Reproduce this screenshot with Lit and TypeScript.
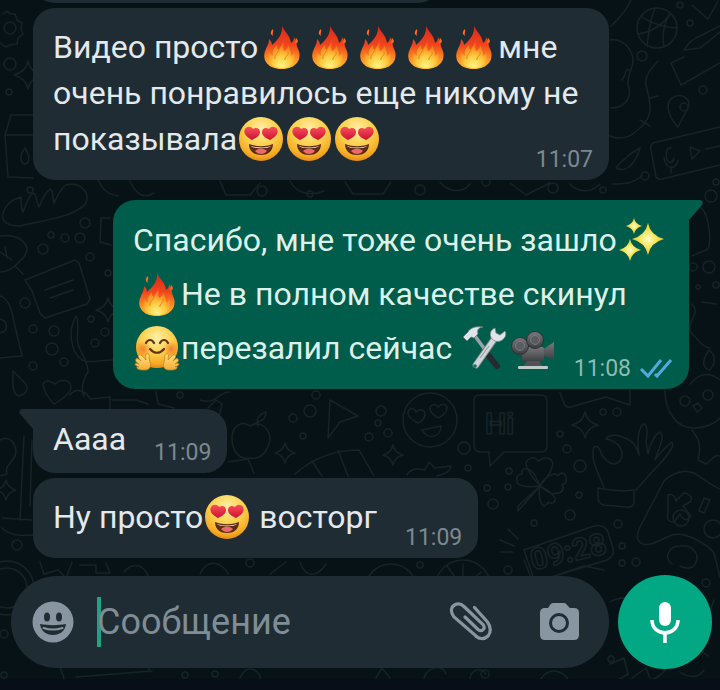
import { LitElement, html, svg, css } from "lit";
import { customElement, property } from "lit/decorators.js";

type Part = string | { e: string };
interface Message {
  out?: boolean;
  tail?: boolean;
  wide?: boolean;
  size?: string;
  time: string;
  lines: Part[][];
}

const e = (name: string) => ({ e: name });

const messages: Message[] = [
  {
    wide: true,
    time: "11:07",
    lines: [
      ["Видео просто", e("fire"), e("fire"), e("fire"), e("fire"), e("fire"), "мне"],
      ["очень понравилось еще никому не"],
      ["показывала", e("love"), e("love"), e("love")],
    ],
  },
  {
    out: true,
    tail: true,
    wide: true,
    size: "loose",
    time: "11:08",
    lines: [
      ["Спасибо, мне тоже очень зашло", e("sparkles")],
      [e("fire"), "Не в полном качестве скинул"],
      [e("hug"), "перезалил сейчас ", e("tools"), e("camera")],
    ],
  },
  { tail: true, size: "compact", time: "11:09", lines: [["Аааа"]] },
  { time: "11:09", lines: [["Ну просто", e("love"), " восторг"]] },
];

const labels: Record<string, string> = {
  fire: "🔥",
  love: "😍",
  sparkles: "✨",
  hug: "🤗",
  tools: "🛠",
  camera: "🎥",
};

const faceGradient = svg`
  <radialGradient id="face" cx="50%" cy="28%" r="72%">
    <stop offset="0" stop-color="#fff0a8"/><stop offset=".5" stop-color="#fdd14e"/>
    <stop offset=".85" stop-color="#f6ab25"/><stop offset="1" stop-color="#e58a16"/>
  </radialGradient>`;

const spark = (x: number, y: number, r: number) => {
  const k = r * 0.22;
  return `M${x} ${y - r}Q${x + k * 0.7} ${y - k} ${x + r} ${y}Q${x + k * 0.7} ${y + k} ${x} ${y + r}Q${x - k * 0.7} ${y + k} ${x - r} ${y}Q${x - k * 0.7} ${y - k} ${x} ${y - r}Z`;
};

const art: Record<string, unknown> = {
  fire: svg`
    <defs>
      <linearGradient id="flame" x1="0" y1="0" x2="0" y2="1">
        <stop offset="0" stop-color="#d8261c"/><stop offset=".45" stop-color="#f0441b"/>
        <stop offset=".75" stop-color="#fb8a22"/><stop offset="1" stop-color="#fcc53a"/>
      </linearGradient>
      <radialGradient id="core" cx="50%" cy="92%" r="80%">
        <stop offset="0" stop-color="#fff28a"/><stop offset=".4" stop-color="#ffd040"/><stop offset=".75" stop-color="#fb8f22"/><stop offset="1" stop-color="#f2571c"/>
      </radialGradient>
    </defs>
    <path fill="url(#flame)" d="M24 2c1 6 8 9 9 18 2-1 3-3 3-6 3 4 2 7 4 12 5 10-2 20-16 20C9 46 3 36 8 26c1-3 3-5 3-10 2 2 3 4 3 6C20 17 25 11 24 2Z"/>
    <path fill="url(#core)" d="M25 16c2 5-1 8 1 12 3-1 4-3 4-6 3 5 2 8 4 11 1-1 2-3 2-5 4 9-1 17-12 17S8 38 11 29c2 2 2 3 4 4-1-6 1-8 4-11 0 3 0 4 2 5 1-4 5-6 4-11Z"/>
    <path fill="none" stroke="#f47a20" stroke-width="1" d="M17 36c-1-5 4-6 4-10M27 37c-1-3 4-4 3-8"/>
    <path fill="#f0722a" d="M15 6c-3 3-3 5 0 7-1-3 1-4 0-7ZM38 15c3 3 2 5-1 6 1-2 0-3 1-6Z"/>`,
  love: svg`
    <defs>${faceGradient}
      <linearGradient id="heart" x1="0" y1="0" x2="0" y2="1"><stop offset="0" stop-color="#f9505a"/><stop offset="1" stop-color="#cc1230"/></linearGradient>
    </defs>
    <circle cx="24" cy="24" r="22" fill="url(#face)"/>
    <path fill="url(#heart)" d="M15 25C9 22 6 18 8 14c2-3 6-3 8 0 3-2 7-1 7 3 0 4-4 6-8 8ZM33 25c-4-2-8-4-8-8 0-4 4-5 7-3 2-3 6-3 8 0 2 4-1 8-7 11Z"/>
    <path fill="#5f2b12" d="M12 29c8 3 16 3 24 0 0 8-6 11-12 11s-12-3-12-11Z"/>
    <path fill="#fffaf0" d="M14 31c7 2 13 2 20 0-2 3-18 3-20 0Z"/>
    <path fill="#ec6a6e" d="M18 36c3-3 9-3 12 0-3 4-9 4-12 0Z"/>`,
  sparkles: svg`
    <defs><radialGradient id="spark"><stop offset="0" stop-color="#fffbd0"/><stop offset=".5" stop-color="#f9e458"/><stop offset="1" stop-color="#e8c42c"/></radialGradient></defs>
    <path fill="url(#spark)" d="${spark(31, 23, 16)}"/>
    <path fill="url(#spark)" d="${spark(17, 10, 8)}"/>
    <path fill="url(#spark)" d="${spark(13, 34, 11)}"/>`,
  hug: svg`
    <defs>${faceGradient}
      <radialGradient id="blush"><stop offset="0" stop-color="#ef6a25" stop-opacity=".75"/><stop offset="1" stop-color="#ef6a25" stop-opacity="0"/></radialGradient>
      <linearGradient id="hand" x1="0" y1="0" x2="0" y2="1"><stop offset="0" stop-color="#ffe681"/><stop offset="1" stop-color="#f2ac35"/></linearGradient>
    </defs>
    <circle cx="24" cy="23" r="21" fill="url(#face)"/>
    <circle cx="10" cy="25" r="8" fill="url(#blush)"/><circle cx="38" cy="25" r="8" fill="url(#blush)"/>
    <path fill="none" stroke="#633313" stroke-width="2.2" stroke-linecap="round" d="M13 19c2-4 6-4 8 0M27 19c2-4 6-4 8 0M17 25c4 5 10 5 14 0"/>
    <g fill="url(#hand)" stroke="#cf7f22" stroke-width=".8">
      <path d="M13 30c2-1 4 1 3 4l1 4c2 5-1 8-5 8-3 0-5 0-7-1-2-1-1-3 1-2-3-1-4-2-4-3 1-1 2-1 4 0-3-2-4-3-3-5 1-1 3 0 5 2-3-4-3-5-2-6 2-1 4 2 7 5 0-3-1-5 0-6Z"/>
      <path d="M35 30c-2-1-4 1-3 4l-1 4c-2 5 1 8 5 8 3 0 5 0 7-1 2-1 1-3-1-2 3-1 4-2 4-3-1-1-2-1-4 0 3-2 4-3 3-5-1-1-3 0-5 2 3-4 3-5 2-6-2-1-4 2-7 5 0-3 1-5 0-6Z"/>
    </g>`,
  tools: svg`
    <path stroke="#252b2e" stroke-width="6" stroke-linecap="round" d="M25 27 37 42"/>
    <path stroke="#9aa3a8" stroke-width="3.500" d="m15 12 11 15"/>
    <path fill="#dfe4e6" stroke="#6c757a" stroke-width=".8" d="M3 13 8 8c2-4 7-6 15-5-5 1-6 3-5 7l-4 4-3-1-4 4Z"/>
    <path stroke="#7e878b" stroke-width="7" stroke-linecap="round" d="M16 41 35 14"/>
    <path stroke="#cfd6d9" stroke-width="5" stroke-linecap="round" d="M16 41 35 14"/>
    <path fill="#dfe4e6" stroke="#7e878b" stroke-width=".8" d="M35 4c-5 2-6 7-3 11 4 4 10 3 13-2 1-2 1-4 0-6l-5 4-4-2Z"/>
    <circle cx="15" cy="42" r="1.800" fill="#17695a"/>
    <path stroke="#9ba4a8" stroke-width="1.200" d="m20 34 9-12"/>`,
  camera: svg`
    <defs><linearGradient id="metal" x1="0" y1="0" x2="0" y2="1"><stop offset="0" stop-color="#77797c"/><stop offset="1" stop-color="#3b3d40"/></linearGradient></defs>
    <path fill="url(#metal)" d="M34 26 46 18v18l-12-5Z"/>
    <rect x="14" y="23" width="22" height="15" rx="2" fill="url(#metal)"/>
    <path fill="#505356" d="M19 37h12l4 6H15Z"/>
    <circle cx="12" cy="22" r="8.500" fill="url(#metal)" stroke="#2e3032"/>
    <circle cx="27" cy="16" r="8.500" fill="url(#metal)" stroke="#2e3032"/>
    <circle cx="12" cy="22" r="4.500" fill="#5a5c5f" stroke="#77797c"/><circle cx="27" cy="16" r="4.500" fill="#5a5c5f" stroke="#77797c"/>
    <rect x="10" y="42" width="30" height="3" rx="1" fill="#bfc9c8"/>`,
};

@customElement("chat-emoji")
class ChatEmoji extends LitElement {
  @property() name = "fire";

  static styles = css`
    :host {
      display: inline-block;
      width: 48px;
      height: 44px;
      vertical-align: -11px;
    }
    .art {
      display: block;
      width: 100%;
      height: 100%;
      overflow: visible;
    }
  `;

  render() {
    return html`<svg class="art" viewBox="0 2 48 44" fill="none" role="img" aria-label=${labels[this.name]}>
      ${art[this.name]}
    </svg>`;
  }
}

@customElement("chat-bubble")
class ChatBubble extends LitElement {
  @property({ attribute: false }) message!: Message;

  static styles = css`
    .bubble {
      position: relative;
      display: flex;
      align-items: flex-end;
      gap: 28px;
      border-radius: 22px;
      background: #202c33;
      color: #e3e9ec;
    }
    .wide {
      display: grid;
      grid-template-columns: 1fr;
    }
    .wide > * {
      grid-area: 1 / 1;
    }
    .out {
      background: #005c4b;
      color: #dcf1ea;
    }
    .text {
      margin: 0;
      padding: 16px 0 18px 20px;
      font-size: 32px;
      line-height: 46px;
    }
    .line {
      display: block;
      white-space: pre-wrap;
    }
    .loose .text {
      padding-block: 13px 14px;
      line-height: 54px;
    }
    .compact .text {
      padding-block: 7px 11px;
    }
    .meta {
      display: flex;
      align-items: center;
      justify-self: end;
      align-self: end;
      gap: 8px;
      padding: 0 16px 7px 0;
      color: #7c8990;
      font-size: 23px;
      line-height: 26px;
    }
    .out .meta {
      color: #8dbbb0;
    }
    .checks {
      width: 34px;
      height: 24px;
    }
    .tail {
      position: absolute;
      top: 0;
      left: -14px;
      width: 36px;
      height: 22px;
      fill: #202c33;
    }
    .out .tail {
      left: auto;
      right: -14px;
      fill: #005c4b;
    }
  `;

  render() {
    const m = this.message;
    return html`<article class="bubble ${m.out ? "out" : ""} ${m.wide ? "wide" : ""} ${m.size ?? ""}">
      ${m.tail
        ? html`<svg class="tail" viewBox="0 0 36 22" aria-hidden="true">
            <path d=${m.out ? "M0 0H33Q37 1 35 5L22 20V22H0Z" : "M36 0H3Q-1 1 1 5L14 20V22H36Z"} />
          </svg>`
        : ""}
      <p class="text">
        ${m.lines.map(
          (line) =>
            html`<span class="line">${line.map((p) => (typeof p === "string" ? p : html`<chat-emoji name=${p.e}></chat-emoji>`))}</span>`
        )}
      </p>
      <span class="meta">
        <time>${m.time}</time>
        ${m.out
          ? html`<svg class="checks" viewBox="0 0 34 24" fill="none" stroke="#53a9dc" stroke-width="3" role="img" aria-label="✓✓">
              <path d="m2 12 7 7L22 3M16 17l2 2L32 3" />
            </svg>`
          : ""}
      </span>
    </article>`;
  }
}

const dots: number[][] = [
  [85, 223, 5], [65, 238, 4], [80, 238, 5], [43, 249, 5], [90, 257, 4], [51, 235, 3], [25, 303, 5], [33, 329, 4],
  [54, 331, 5], [52, 349, 6], [64, 362, 4], [33, 366, 4], [91, 319, 3], [105, 332, 4], [95, 343, 4], [108, 273, 3],
  [10, 64, 6], [9, 92, 3], [10, 28, 6], [680, 5, 3], [690, 23, 3], [642, 56, 5], [703, 90, 4], [645, 176, 4],
  [716, 182, 3], [709, 267, 6], [693, 267, 4], [716, 285, 3], [698, 287, 2], [711, 196, 6], [293, 418, 4], [310, 411, 6],
  [303, 436, 3], [381, 411, 5], [378, 423, 3], [388, 433, 4], [369, 437, 4], [464, 448, 6], [468, 468, 3],
  [509, 471, 3], [508, 487, 3], [487, 488, 3], [493, 504, 5], [560, 434, 3], [567, 449, 4], [580, 466, 6],
  [603, 412, 3], [617, 412, 4], [579, 495, 3], [570, 515, 5], [534, 523, 3], [618, 524, 4], [622, 546, 3],
  [622, 563, 3], [636, 562, 4], [17, 545, 5], [706, 583, 4], [185, 675, 3], [215, 674, 3], [4, 634, 4], [4, 675, 3],
  [30, 190, 3], [262, 191, 5], [310, 194, 3], [420, 190, 5], [486, 182, 4], [553, 188, 5], [603, 190, 3],
  [180, 395, 3], [316, 395, 4], [508, 570, 4], [250, 563, 4], [420, 565, 3], [485, 674, 4], [611, 659, 3],
];

const stars: number[][] = [[28, 75, 14], [393, 455, 10], [585, 425, 13], [285, 453, 10], [108, 310, 12], [6, 490, 10]];

@customElement("doodle-wallpaper")
class DoodleWallpaper extends LitElement {
  static styles = css`
    :host {
      display: block;
    }
    .art {
      display: block;
      width: 100%;
      height: 100%;
    }
    .glyphs {
      font-family: Roboto, sans-serif;
      font-weight: 700;
      font-size: 30px;
    }
  `;

  render() {
    return html`<svg
      class="art"
      viewBox="0 0 720 690"
      preserveAspectRatio="xMidYMid slice"
      fill="none"
      stroke="#162427"
      stroke-width="1.5"
      stroke-linejoin="round"
      stroke-linecap="round"
      aria-hidden="true"
    >
      ${dots.map(([x, y, r]) => svg`<circle cx=${x} cy=${y} r=${r} />`)}
      ${stars.map(([x, y, r]) => svg`<path d=${spark(x, y, r)} />`)}
      <path d="M3 14l4-3 3 3h5l2 6 5 3-1 6 2 5-5 4-1 6-7 1-4 2-6-4M11 115h22M5 135l6-20M5 135h28M5 135l3 42 25 1M25 148c-6 8-5 15 0 16 5-1 5-8 0-16Z" />
      <path d="M3 213c3-10 10-14 18-16 0 8 0 12 2 15 3-8 5-15 10-19 4 0 3 10 6 14 3-8 6-14 11-18 4 2 2 10 4 14 3-6 6-14 12-18 15-4 24 8 20 18-8 12-38 17-62 22-12 3-24-2-21-12Z" />
      <path d="M0 236c12-2 24 2 27 12 0 8-6 12-12 18-6 5-10 6-15 6M15 266l8 8M0 252l12 8M5 247l2 11M25 280l50-20 4 3 11 36-3 5-42 14-5-5-8-22ZM45 290l28-10M50 298l23-8" />
      <path d="M0 296c8 2 12 14 14 26l8 34-22 2M0 319c8 2 9 12 0 14M76 316c-8 14-6 36 6 44 8 4 16 0 31 0M76 316c4 4 0 20 2 28 4 12 10 16 10 28-4 6-8 16-4 24M13 371c0 10-2 22 6 25 8-2 10-8 6-13ZM43 384c4-6 9-2 12 0 6-6 16-4 16 3 0 6-8 12-17 17-6-6-10-12-11-20Z" />
      <path d="M110 218h-9l-1 24 11 3M98 180c4 8 8 14 20 16M0 440c12-6 18 8 15 16-6 10-10 10-8 18l-7 2M24 436l-4 84M32 440l-2 66M2 518l30 2M2 528c8 8 20 8 32 7" />
      <circle cx="657" cy="28" r="20" />
      <path d="M641 16c10 8 28 12 36 12M638 34c14-2 26-10 32-20M647 46c2-14 2-24 8-38M664 47c-2-12 0-24 6-33M692 5l16 14 10-18M690 42l-6 8 16-2 20-16M690 42l6-4 24-12M671 63l10 22 39-22M671 63l13-6" />
      <path d="M678 127c-8-8-14-22-6-29 8-6 20 0 16 10ZM653 143l67-16M653 143q-3 2-2 7l5 27q2 3 6 2l58-14M671 148c-4-2-6 6-4 12 2 4 6 3 7-2M664 158c2 12 12 12 14 2M671 167v6M690 147l2 12 8-8ZM706 149l14-3" />
      <circle cx="684" cy="107" r="4" />
      <path d="M610 40c12-2 22 8 23 20 0 10-8 18-4 28 2 10-4 20-18 20M658 61c-8 8-14 16-12 24 6 22 8 34-12 48-8 6-18 6-24 3M611 26c4-4 14-12 20-26M622 80c6-8 2-12 8-10M650 98l8-2M640 120l10 6M640 148c-8 4-20 14-24 20 8 4 18 0 24-20ZM612 184c12 0 20 0 30-8" />
      <path d="M700 208c8 0 14 40 6 42l-14 6M702 302l14 2M692 304c10 10-8 20 0 30 8 6 8 12 18 14M709 350c-8 12-6 18 0 20 6-4 8-14 0-20ZM690 384c10-12 20-12 30-4" />
      <path d="M130 181c6 14 14 18 24 12M220 181l6 14h24l10-12M290 181c6 12 20 16 34 10M345 182l8 12h30l8-12M440 182c8 10 22 12 30 2M510 183l16 12 24-12M570 184c8 8 20 10 30 0" />
      <path d="M70 395c6-8 16-4 20 4l20-2v14M112 400h24l12 4M156 392l2 12 16 4M200 400c16 6 20-10 30-8M250 426c-8-6-18 0-18 12 0 14 8 22 18 20 12 2 18-8 20-18 0-12-10-20-20-14ZM250 426l8-4c8-2 8-8 8-10-8 2-10 8-8 14M330 400l-2 38 12-16 18-6ZM208 408l8-8 6 4-3 12M228 462l20-3 6 14" />
      <path d="M295 474c18-16 40-24 64-24l15 26M312 461l10 15M338 450l10 26" />
      <circle cx="430" cy="420" r="27" />
      <path d="M418 423c-8-4-12-8-9-13 3-3 6-1 7 2 4-4 9-2 9 2 0 4-3 7-7 9ZM438 418c-6-4-10-8-7-12 3-3 6-1 7 1 4-4 9-3 9 1 0 4-4 8-9 10ZM422 430l19-4c0 12-14 14-19 4Z" />
      <path d="M479 395h62q6 0 6 6v45q0 6-6 6h-37l-14 14-1-14h-8q-7 0-7-7v-44q0-6 5-6Z" />
      <text class="glyphs" x="485" y="434">Hi</text>
      <path d="M407 475c4-8 12-6 18-5l4-8 6 6 16-2c0 6-8 8-14 10M560 392c4 14 6 18 14 14l32-9 24 8V390" />
      <path d="M540 486c-8-8-18-22-12-26 4-4 8-2 11 1 4-4 10-4 13 0 3 6-6 18-12 25ZM540 486c-14 2-24 0-23-6-1-4 2-6 5-6-1-4 2-6 6-5 6 3 8 8 12 17ZM540 486c6-12 16-14 18-10 2-4 8-4 8 2 1 4-1 6-4 7 3 3 0 8-4 8-8 2-12-2-18-7ZM540 486c-2 10 0 18 4 20 2-1 4-2 4-4 4 3 8 0 7-4-3-6-8-8-15-12ZM540 486l-22 20v5Z" />
      <path d="M604 487c-6-14-14-28-10-40 4-2 6 2 8 8 6 8 12 12 18 6 6-10-2-20-14-22 4-8 26-2 31 10l2 6c-2-10-2-24 4-31 6 0 4 12 3 18l2 12c2-12 8-20 12-22 6 4-2 18-5 28 4-6 12-14 17-18 4 4-10 20-20 30l-16 18M598 488q20 4 36 2v12q0 6-8 5l-22-2q-6-1-6-8Z" />
      <path d="M665 390c0 22 12 38 28 38 14 0 24-6 27-10M692 430c6 8 10 14 6 30l8 4c6-4 8-10 14-8" />
      <circle cx="685" cy="401" r="5" /><circle cx="708" cy="395" r="5" />
      <path d="M693 406l5-3 4 5-5 4Z" />
      <path d="M720 489c-14-6-18-12-26-16-10-4-22 0-30 8l-24 46c-8 16 4 20 14 16l18-8c14-4 36 10 42 18l6 24M668 495c4-2 8 2 8 6l8-8c4 0 10 4 6 9l-7 4 8 10c-4 6-8 4-11-2l-6 8c-4 0-8-2-6-8Z" />
      <circle cx="681" cy="518" r="8" /><circle cx="713" cy="529" r="9" />
      <path d="M704 498l6 2-6 13-5-2ZM672 564c-8-6-4-18 8-18 12-2 20 8 16 16-2 6-8 8-16 4M524 550l70-24q10-2 14 6l5 16q2 8-6 12l-72 22ZM508 529l10 10M500 540l14 6M501 552h12" />
      <text class="glyphs" transform="rotate(-13 535 570)" x="533" y="570">09:28</text>
      <circle cx="463" cy="588" r="28" /><circle cx="391" cy="590" r="26" />
      <path d="M463 588l-16-22M463 588v-24M463 588l18-16M40 562l4 12 14-4 8 8 6-16M80 565h16v8h14l-4-10M124 572c8-10 20-8 24 4M200 574c8-18 24-10 28 0M270 574l16-12M300 562c6 18 18 14 26 2" />
      <circle cx="7" cy="588" r="20" /><circle cx="7" cy="588" r="27" />
      <path d="M524 560l8 20M560 574l24-8 20 4M610 602c12-8 20 0 24-8l10-12M714 600c-6 14-8 30-14 50l8 6" />
      <path d="M610 664l14-6 4 16-10 6M632 678l14-10 4 10M64 680c0-8-6-10-2-14M76 677l76-6M150 672l-2-6M240 678c8-18 22-4 20 0M376 678l6-10 8 10M424 678c4-12 18-14 22-4M470 680c0-10 10-14 16-6M540 680c12-18 28-4 28 0M644 680c8 2 20-6 22-12M680 672c12 8 20 4 24-2" />
    </svg>`;
  }
}

@customElement("app-root")
class AppRoot extends LitElement {
  static styles = css`
    :host {
      display: block;
      position: relative;
      height: 100vh;
      overflow: hidden;
      background: #071217;
      font-family: Roboto, "Noto Sans", sans-serif;
    }
    .wallpaper {
      position: absolute;
      inset: 0;
    }
    .screen {
      position: relative;
      display: flex;
      flex-direction: column;
      height: 100%;
    }
    .chat {
      flex: 1;
      min-height: 0;
      display: flex;
      flex-direction: column;
      align-items: flex-start;
      justify-content: flex-end;
      padding: 0 31px 17px 33px;
    }
    .earlier {
      flex: none;
      width: 62%;
      height: 60px;
      margin-bottom: 5px;
      border-radius: 22px;
      background: #202c33;
    }
    .item {
      display: block;
      flex: none;
      max-width: 100%;
      margin-bottom: 5px;
    }
    .item.wide {
      width: 80vw;
    }
    .item.turn {
      margin-bottom: 20px;
    }
    .item.out {
      align-self: flex-end;
    }
    .item:last-child {
      margin-bottom: 0;
    }
    .composer {
      flex: none;
      display: flex;
      align-items: center;
      gap: 9px;
      padding: 0 8px 10px 11px;
    }
    .field {
      flex: 1;
      min-width: 0;
      display: flex;
      align-items: center;
      height: 92px;
      padding: 0 28px 0 20px;
      border-radius: 46px;
      background: #202c33;
    }
    button {
      flex: none;
      display: grid;
      place-items: center;
      padding: 0;
      border: 0;
      background: none;
      color: #8796a0;
    }
    .tool {
      width: 44px;
      height: 44px;
    }
    .tool + .tool {
      margin-left: 44px;
    }
    .icon {
      width: 44px;
      height: 44px;
    }
    .caret {
      flex: none;
      width: 4px;
      height: 50px;
      margin: 0 -4px 0 22px;
      background: #1da386;
    }
    .input {
      flex: 1;
      min-width: 0;
      height: 50px;
      padding: 0;
      border: 0;
      outline: 0;
      background: none;
      color: #e3e9ec;
      font-family: inherit;
      font-size: 36px;
      caret-color: #1da386;
    }
    .input::placeholder {
      color: #7f8d96;
      opacity: 1;
    }
    .mic {
      width: 94px;
      height: 94px;
      border-radius: 50%;
      background: #02a884;
      color: #fff;
    }
    .nav {
      flex: none;
      height: 11px;
      background: #070e18;
    }
  `;

  render() {
    return html`
      <doodle-wallpaper class="wallpaper"></doodle-wallpaper>
      <main class="screen">
        <section class="chat">
          <div class="earlier"></div>
          ${messages.map((m, i) => {
            const next = messages[i + 1];
            const turn = next && !!next.out !== !!m.out;
            return html`<chat-bubble
              class="item ${m.wide ? "wide" : ""} ${m.out ? "out" : ""} ${turn ? "turn" : ""}"
              .message=${m}
            ></chat-bubble>`;
          })}
        </section>
        <form class="composer" @submit=${(ev: Event) => ev.preventDefault()}>
          <div class="field">
            <button class="tool" type="button" aria-label="Эмодзи">
              <svg class="icon" viewBox="0 0 44 44">
                <circle cx="22" cy="22" r="20.5" fill="currentColor" />
                <ellipse cx="16" cy="17" rx="3" ry="4.500" fill="#202c33" />
                <ellipse cx="28" cy="17" rx="3" ry="4.500" fill="#202c33" />
                <path fill="#202c33" d="M9 24c8 1.500 18 1.500 26 0-1 7-6 11-13 11S10 31 9 24Z" />
                <path fill="none" stroke="currentColor" stroke-width="2" stroke-linecap="round" d="M12.500 28c6 2 13 2 19 0" />
              </svg>
            </button>
            <span class="caret"></span>
            <input class="input" type="text" placeholder="Сообщение" aria-label="Сообщение" />
            <button class="tool" type="button" aria-label="Прикрепить">
              <svg class="icon" viewBox="0 0 44 44" fill="none" stroke="currentColor" stroke-width="3.200" stroke-linecap="round">
                <path d="M25.500 7.500 38.500 22C42 27 42 32 39 36c-4 4-10 3-13-1L5 17C1 12 2 7 5.500 5c3.500-2 7-1 9.500 1.500L34 24.500c3 4-1 8-5 5L16 17" />
              </svg>
            </button>
            <button class="tool" type="button" aria-label="Камера">
              <svg class="icon" viewBox="0 0 44 44">
                <path fill="currentColor" d="M16 3h11q2 0 3 2l3 3h4q5 0 5 5v22q0 5-5 5H8q-5 0-5-5V13q0-5 5-5h3l2-3q1-2 3-2Z" />
                <circle cx="22" cy="23" r="8.500" fill="none" stroke="#202c33" stroke-width="3" />
              </svg>
            </button>
          </div>
          <button class="mic" type="button" aria-label="Голосовое сообщение">
            <svg class="icon" viewBox="0 0 44 44" fill="none" stroke="currentColor" stroke-width="3.500">
              <rect x="16" y="2" width="12" height="24" rx="6" fill="currentColor" stroke="none" />
              <path d="M9 20c0 17 26 17 26 0M22 33v10" />
            </svg>
          </button>
        </form>
        <div class="nav"></div>
      </main>
    `;
  }
}
